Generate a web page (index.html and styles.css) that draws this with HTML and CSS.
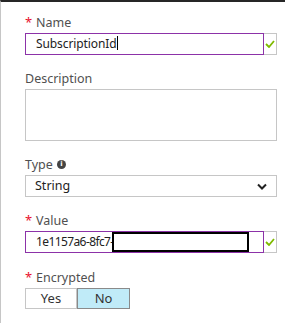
FILE: index.html
```html
<!DOCTYPE html>
<html>
<head>
<meta charset="utf-8">
<link rel="stylesheet" href="styles.css">
</head>
<body>
<div class="blade">
  <div class="field">
    <div class="label"><span class="req">*</span>Name</div>
    <div class="control">
      <div class="input focus">SubscriptionId<span class="caret"></span></div>
      <div class="valid"><svg width="10" height="8" viewBox="0 0 10 8"><path d="M1 4 L4 7 L9 1" fill="none" stroke="#7fba00" stroke-width="1.8"/></svg></div>
    </div>
  </div>
  <div class="field">
    <div class="label">Description</div>
    <div class="textarea"></div>
  </div>
  <div class="field">
    <div class="label">Type <span class="info">i</span></div>
    <div class="select">String<svg class="chev" width="10" height="7" viewBox="0 0 10 7"><path d="M1 1.5 L5 5.5 L9 1.5" fill="none" stroke="#222" stroke-width="2"/></svg></div>
  </div>
  <div class="field">
    <div class="label"><span class="req">*</span>Value</div>
    <div class="control">
      <div class="input focus value">1e1157a6-8fc7-<span class="redact"></span></div>
      <div class="valid"><svg width="10" height="8" viewBox="0 0 10 8"><path d="M1 4 L4 7 L9 1" fill="none" stroke="#7fba00" stroke-width="1.8"/></svg></div>
    </div>
  </div>
  <div class="field">
    <div class="label"><span class="req">*</span>Encrypted</div>
    <div class="toggle">
      <div class="opt">Yes</div>
      <div class="opt on">No</div>
    </div>
  </div>
</div>
</body>
</html>
```
FILE: styles.css
```css
html, body { margin: 0; padding: 0; background: #fff; }
body { width: 285px; height: 325px; overflow: hidden; font-family: "Noto Sans", "Open Sans", sans-serif; font-size: 12.5px; color: #333; }
.blade { border-top: 2px solid #262626; border-left: 1px solid #c6c6c6; height: 323px; box-sizing: border-box; padding: 13px 8px 0 24px; }
.field { margin-bottom: 16px; }
.field:nth-child(4) { margin-bottom: 17px; }
.label { height: 18px; line-height: 16px; color: #505050; display: flex; align-items: flex-start; }
.req { color: #e8112d; font-size: 13px; width: 11px; line-height: 14px; }
.control { display: flex; height: 22px; }
.input { flex: 1; box-sizing: border-box; height: 22px; border: 1px solid #c6c6c6; padding: 0 9px 0 10px; line-height: 20px; color: #222; position: relative; white-space: nowrap; font-size: 12px; letter-spacing: -0.1px; }
.input.focus { border-color: #8c32a8; }
.input.value { letter-spacing: -0.6px; }
.caret { display: inline-block; width: 1px; height: 14px; background: #000; vertical-align: -2px; margin-left: 1px; }
.valid { width: 13px; box-sizing: border-box; border: 1px solid #c6c6c6; border-left: none; display: flex; align-items: center; justify-content: center; }
.textarea { height: 52px; border: 1px solid #c6c6c6; box-sizing: border-box; }
.info { display: inline-flex; width: 9px; height: 9px; border-radius: 50%; background: #444; color: #fff; font-size: 7px; font-weight: bold; line-height: 9px; justify-content: center; margin: 3px 0 0 4px; font-family: "DejaVu Sans", sans-serif; }
.select { height: 22px; box-sizing: border-box; border: 1px solid #c6c6c6; padding: 0 9px 0 9px; line-height: 20px; display: flex; justify-content: space-between; align-items: center; color: #222; font-size: 12.5px; }
.redact { position: absolute; left: 86px; top: 0; width: 137px; height: 20px; box-sizing: border-box; border: 2px solid #000; background: #fff; }
.toggle { display: flex; height: 21px; }
.opt { width: 52px; box-sizing: border-box; border: 1px solid #c6c6c6; text-align: center; line-height: 19px; color: #333; font-size: 13px; }
.opt.on { width: 53px; background: #c0ebf8; border-color: #8a8a8a; }
```
